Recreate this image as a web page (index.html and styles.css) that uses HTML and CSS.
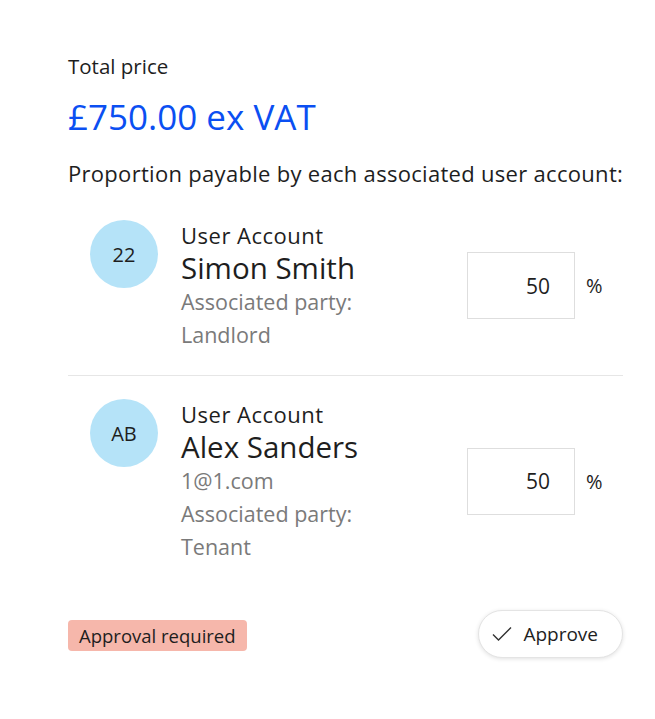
FILE: index.html
```html
<!doctype html>
<html lang="en">
  <head>
    <meta charset="UTF-8" />
    <meta name="viewport" content="width=device-width, initial-scale=1.0" />
    <title>Price split</title>
    <link rel="stylesheet" href="styles.css">
  </head>
  <body>
    <div class="page">
      <div class="label">Total price</div>
      <div class="price">£750.00 ex VAT</div>
      <div class="intro">Proportion payable by each associated user account:</div>

      <div class="account">
        <div class="avatar">22</div>
        <div class="details">
          <div class="kind">User Account</div>
          <div class="name">Simon Smith</div>
          <div class="muted">Associated party:</div>
          <div class="muted">Landlord</div>
        </div>
        <div class="share">
          <input class="share-input" type="text" value="50" />
          <span class="pct">%</span>
        </div>
      </div>

      <div class="account">
        <div class="avatar">AB</div>
        <div class="details">
          <div class="kind">User Account</div>
          <div class="name">Alex Sanders</div>
          <div class="muted">1@1.com</div>
          <div class="muted">Associated party:</div>
          <div class="muted">Tenant</div>
        </div>
        <div class="share">
          <input class="share-input" type="text" value="50" />
          <span class="pct">%</span>
        </div>
      </div>

      <div class="footer">
        <span class="badge">Approval required</span>
        <button type="button" class="approve">
          <svg class="tick" viewBox="0 0 20 16" width="20" height="16">
            <path d="M1 8.5 L6.5 14 L19 1.5" fill="none" stroke="#333" stroke-width="1.4" />
          </svg>
          Approve
        </button>
      </div>
    </div>
  </body>
</html>
```

FILE: styles.css
```css
body {
  margin: 0;
  font-family: "Open Sans", "Noto Sans", sans-serif;
  color: #1e1e1e;
  background: #fff;
}
.page {
  width: 555px;
  padding: 50px 0 40px 68px;
}
.label {
  font-size: 20.5px;
  line-height: 33px;
}
.price {
  font-size: 35px;
  line-height: 40px;
  color: #0b4ff2;
  margin-top: 14px;
}
.intro {
  font-size: 22px;
  line-height: 33px;
  margin-top: 20px;
  letter-spacing: 0.3px;
  white-space: nowrap;
}
.account {
  display: flex;
  align-items: center;
  padding: 30px 22px 24px;
  border-bottom: 1px solid #e6e6e6;
}
.account + .account {
  padding-top: 23px;
  border-bottom: none;
}
.avatar {
  align-self: flex-start;
  width: 68px;
  height: 68px;
  border-radius: 50%;
  background: #b5e3f8;
  display: flex;
  align-items: center;
  justify-content: center;
  font-size: 20px;
  flex-shrink: 0;
}
.details {
  flex: 1;
  margin-left: 23px;
  white-space: nowrap;
}
.kind {
  font-size: 22px;
  line-height: 31px;
  letter-spacing: 0.5px;
}
.name {
  font-size: 29.5px;
  line-height: 34px;
}
.muted {
  font-size: 21.5px;
  line-height: 33px;
  color: #7a7a7a;
}
.share {
  display: flex;
  align-items: center;
}
.share-input {
  box-sizing: border-box;
  width: 108px;
  height: 67px;
  border: 1.5px solid #dedede;
  padding: 0 24px 0 0;
  text-align: right;
  font-family: inherit;
  font-size: 21px;
  color: #1e1e1e;
  outline: none;
}
.pct {
  font-size: 20px;
  margin-left: 11px;
  width: 15px;
}
.footer {
  display: flex;
  justify-content: space-between;
  align-items: center;
  margin-top: 23px;
}
.badge {
  background: #f6b7ab;
  border-radius: 4px;
  padding: 3px 11px;
  font-size: 18.5px;
  line-height: 25px;
  margin-top: 3px;
}
.approve {
  display: flex;
  align-items: center;
  gap: 11px;
  height: 48px;
  padding: 0 24px 0 13px;
  border: 1px solid #e4e4e4;
  border-radius: 24px;
  background: #fff;
  box-shadow: 0 1px 4px rgba(0, 0, 0, 0.12);
  font-family: inherit;
  font-size: 19px;
  color: #1e1e1e;
}
```
